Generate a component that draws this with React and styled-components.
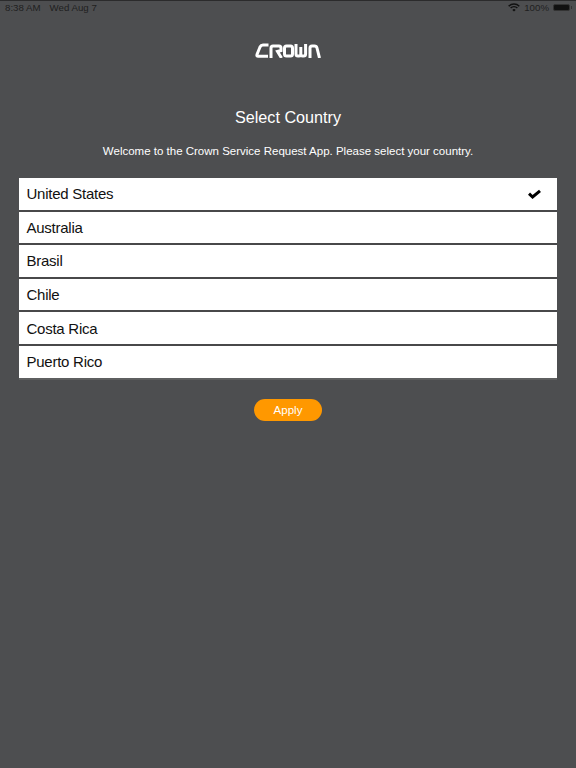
import React from 'react';
import styled, { createGlobalStyle } from 'styled-components';

const countries = ['United States', 'Australia', 'Brasil', 'Chile', 'Costa Rica', 'Puerto Rico'];

const GlobalStyle = createGlobalStyle`
  html, body {
    margin: 0;
    padding: 0;
    background: #4d4e50;
    font-family: "Liberation Sans", Arial, sans-serif;
  }
`;

const Page = styled.div`
  height: 768px;
  background: #4d4e50;
  border-top: 1px solid #2b2b2c;
  box-sizing: border-box;
  overflow: hidden;
`;

const StatusBar = styled.div`
  display: flex;
  justify-content: space-between;
  align-items: center;
  height: 13px;
  padding: 0 4px 0 5px;
  color: #1f1f20;
  font-size: 9.7px;
`;

const StatusGroup = styled.div`
  display: flex;
  align-items: center;
  gap: ${(p) => p.$gap}px;
`;

const Battery = styled.div`
  position: relative;
  width: 17px;
  height: 7px;
  margin-right: 2px;
  background: #111;
  border-radius: 2px;
  border: 1px solid #333;
  box-sizing: border-box;

  &::after {
    content: '';
    position: absolute;
    right: -3px;
    top: 1px;
    width: 1px;
    height: 3px;
    background: #333;
  }
`;

const LogoWrap = styled.div`
  display: flex;
  justify-content: center;
  margin-top: 29px;
`;

const Title = styled.h1`
  margin: 49px 0 0;
  text-align: center;
  color: #fff;
  font-size: 16.2px;
  line-height: 20px;
  font-weight: 400;
`;

const Welcome = styled.p`
  margin: 17px 0 0;
  text-align: center;
  color: #fff;
  font-size: 11.5px;
  line-height: 14px;
`;

const List = styled.div`
  margin: 20px 19px 0;
  background: #fff;
`;

const Row = styled.div`
  display: flex;
  justify-content: space-between;
  align-items: center;
  height: 33.6px;
  box-sizing: border-box;
  padding: 0 16px 0 7.5px;
  color: #111;
  font-size: 15px;
  letter-spacing: -0.25px;
  border-bottom: 2px solid ${(p) => (p.$last ? '#5e5f60' : '#48484a')};
`;

const ApplyButton = styled.button`
  display: block;
  margin: 19px auto 0;
  width: 68px;
  height: 22.5px;
  padding: 0;
  border: none;
  border-radius: 12px;
  background: #ff9800;
  color: #fff;
  font-family: inherit;
  font-size: 11.5px;
`;

function WifiIcon() {
  return (
    <svg width="12" height="9" viewBox="0 0 12 9" fill="none" stroke="#111" strokeWidth="1.4">
      <path d="M.7 3.2a7.6 7.6 0 0 1 10.6 0" />
      <path d="M2.6 5.1a4.9 4.9 0 0 1 6.8 0" />
      <path d="M6 8.6 4.3 6.9a2.4 2.4 0 0 1 3.4 0z" fill="#111" stroke="none" />
    </svg>
  );
}

function Logo() {
  return (
    <svg width="66" height="15" viewBox="0 0 66 15" fill="none" stroke="#fff" strokeWidth="3">
      <path d="M13.5 2H8Q6 2 5 4L2 11.5Q1.4 13.3 3.2 13.3H13" />
      <path d="M16 15V5Q16 3 18 3H24Q26 3 26 5V7.5L22.5 8.5L26.5 15" />
      <path d="M31.5 3H35.5Q37.5 3 37.5 5V11Q37.5 13 35.5 13H31.5Q29.5 13 29.5 11V5Q29.5 3 31.5 3Z" />
      <path d="M41 1V11Q41 13 43 13H44Q45.8 13 45.8 11V4V11Q45.8 13 47.6 13H48.6Q50.6 13 50.6 11V1" />
      <path d="M55 15V5Q55 3 57 3H59.5Q61.5 3 62 5L64.5 15" />
    </svg>
  );
}

function Check() {
  return (
    <svg width="13" height="10" viewBox="0 0 13 10" fill="none" stroke="#000" strokeWidth="3">
      <path d="M1 4.6 4.6 8 12 1.8" />
    </svg>
  );
}

export default function App() {
  return (
    <Page>
      <GlobalStyle />
      <StatusBar>
        <StatusGroup $gap={9}>
          <span>8:38 AM</span>
          <span>Wed Aug 7</span>
        </StatusGroup>
        <StatusGroup $gap={4}>
          <WifiIcon />
          <span>100%</span>
          <Battery />
        </StatusGroup>
      </StatusBar>
      <LogoWrap>
        <Logo />
      </LogoWrap>
      <Title>Select Country</Title>
      <Welcome>Welcome to the Crown Service Request App. Please select your country.</Welcome>
      <List>
        {countries.map((name, i) => (
          <Row key={name} $last={i === countries.length - 1}>
            {name}
            {i === 0 && <Check />}
          </Row>
        ))}
      </List>
      <ApplyButton>Apply</ApplyButton>
    </Page>
  );
}
